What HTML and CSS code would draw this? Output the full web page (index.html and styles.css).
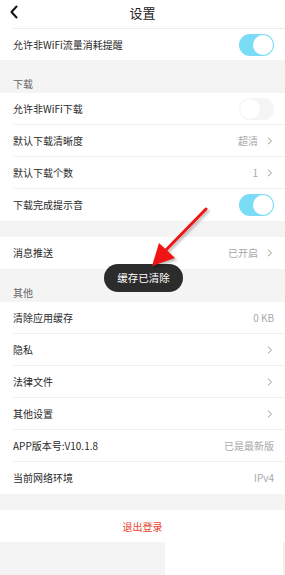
FILE: index.html
```html
<!DOCTYPE html>
<html lang="zh-CN">
<head>
<meta charset="utf-8">
<title>设置</title>
<link rel="stylesheet" href="styles.css">
</head>
<body>
<div class="page">
  <header class="header">
    <svg class="back" width="10" height="14" viewBox="0 0 10 14"><polyline points="7.5,1.5 2.5,7 7.5,12.5" fill="none" stroke="#111" stroke-width="2" stroke-linecap="round" stroke-linejoin="round"/></svg>
    <div class="title">设置</div>
  </header>

  <div class="group">
    <div class="row first"><div class="in"><span class="label">允许非WiFi流量消耗提醒</span><span class="toggle on"><i></i></span></div></div>
  </div>

  <div class="section">下载</div>
  <div class="group">
    <div class="row"><div class="in"><span class="label">允许非WiFi下载</span><span class="toggle"><i></i></span></div></div>
    <div class="row"><div class="in"><span class="label">默认下载清晰度</span><span class="val">超清<svg class="chev" width="6" height="8" viewBox="0 0 6 8"><polyline points="1,0.8 4.6,4 1,7.2" fill="none" stroke="#9a9a9a" stroke-width="1"/></svg></span></div></div>
    <div class="row"><div class="in"><span class="label">默认下载个数</span><span class="val">1<svg class="chev" width="6" height="8" viewBox="0 0 6 8"><polyline points="1,0.8 4.6,4 1,7.2" fill="none" stroke="#9a9a9a" stroke-width="1"/></svg></span></div></div>
    <div class="row last"><div class="in"><span class="label">下载完成提示音</span><span class="toggle on"><i></i></span></div></div>
  </div>

  <div class="gap"></div>
  <div class="group">
    <div class="row last"><div class="in"><span class="label">消息推送</span><span class="val">已开启<svg class="chev" width="6" height="8" viewBox="0 0 6 8"><polyline points="1,0.8 4.6,4 1,7.2" fill="none" stroke="#9a9a9a" stroke-width="1"/></svg></span></div></div>
  </div>

  <div class="section">其他</div>
  <div class="group">
    <div class="row"><div class="in"><span class="label">清除应用缓存</span><span class="val">0 KB</span></div></div>
    <div class="row"><div class="in"><span class="label">隐私</span><span class="val"><svg class="chev" width="6" height="8" viewBox="0 0 6 8"><polyline points="1,0.8 4.6,4 1,7.2" fill="none" stroke="#9a9a9a" stroke-width="1"/></svg></span></div></div>
    <div class="row"><div class="in"><span class="label">法律文件</span><span class="val"><svg class="chev" width="6" height="8" viewBox="0 0 6 8"><polyline points="1,0.8 4.6,4 1,7.2" fill="none" stroke="#9a9a9a" stroke-width="1"/></svg></span></div></div>
    <div class="row"><div class="in"><span class="label">其他设置</span><span class="val"><svg class="chev" width="6" height="8" viewBox="0 0 6 8"><polyline points="1,0.8 4.6,4 1,7.2" fill="none" stroke="#9a9a9a" stroke-width="1"/></svg></span></div></div>
    <div class="row"><div class="in"><span class="label">APP版本号:V10.1.8</span><span class="val">已是最新版</span></div></div>
    <div class="row last"><div class="in"><span class="label">当前网络环境</span><span class="val">IPv4</span></div></div>
  </div>

  <div class="gap"></div>
  <div class="logout">退出登录</div>
  <div class="bottom"><div class="b-left"></div><div class="b-right"></div><div class="b-edge"></div></div>

  <div class="toast">缓存已清除</div>
  <svg class="arrow" width="285" height="575" viewBox="0 0 285 575">
    <line x1="206" y1="209" x2="165" y2="251" stroke="#f01414" stroke-width="3" stroke-linecap="round"/>
    <polygon points="152,266 159,243 175,258" fill="#f01414"/>
  </svg>
</div>
</body>
</html>
```

FILE: styles.css
```css
* { box-sizing: border-box; margin: 0; padding: 0; }
html, body { background: #fff; }
body {
  font-family: "Noto Sans CJK SC", "Noto Sans", "Liberation Sans", sans-serif;
  width: 285px;
  height: 575px;
  overflow: hidden;
}
.page { position: relative; width: 285px; height: 575px; background: #fff; }

.header {
  position: relative;
  height: 29px;
  display: flex;
  align-items: center;
  justify-content: center;
}
.header::after {
  content: "";
  position: absolute;
  left: 13px; right: 0; bottom: 0;
  height: 1px;
  background: #ececec;
}
.back { position: absolute; left: 9px; top: 5px; }
.title { font-size: 13px; color: #222; line-height: 1; margin-top: -5px; }

.group { background: #fff; }
.row { padding-left: 13px; height: 32px; }
.row.first { height: 31px; }
.row .in {
  height: 100%;
  display: flex;
  align-items: center;
  justify-content: space-between;
  padding-right: 11px;
  border-bottom: 1px solid #efefef;
}
.row.last .in, .row.first .in { border-bottom: none; }
.label { font-size: 10px; color: #2a2a2a; line-height: 1; }
.val { font-size: 10px; color: #a8a8a8; line-height: 1; display: flex; align-items: center; gap: 9px; }
.chev { display: block; margin-right: 1px; }

.toggle {
  width: 35px; height: 22px; border-radius: 11px;
  background: #f5f5f5;
  position: relative;
  display: block;
}
.toggle i {
  position: absolute; top: 1px; left: 1px;
  width: 20px; height: 20px; border-radius: 50%;
  background: #fff;
  box-shadow: 0 0 1px rgba(0,0,0,0.06);
}
.toggle.on { background: #7adcf5; }
.toggle.on i { left: 14px; box-shadow: none; }

.section {
  height: 33px;
  background: #f4f4f4;
  padding-left: 13px;
  font-size: 10px;
  color: #666;
  display: flex;
  align-items: flex-end;
  padding-bottom: 4px;
  line-height: 1;
}
.gap { height: 16px; background: #f4f4f4; }

.logout {
  height: 32px;
  display: flex; align-items: center; justify-content: center;
  font-size: 10px; color: #e8412f; background: #fff;
}
.bottom { position: relative; display: flex; height: 35px; }
.b-left { width: 165px; background: #f4f4f4; }
.b-right { flex: 1; background: #fff; }
.b-edge { width: 2px; background: #f0f0f0; }

.toast {
  position: absolute;
  left: 104px; top: 264px;
  width: 79px; height: 28px;
  border-radius: 14px;
  background: #2c2c2c;
  color: #fff;
  font-size: 10.5px;
  display: flex; align-items: center; justify-content: center;
  line-height: 1;
}
.arrow {
  position: absolute; left: 0; top: 0;
  filter: drop-shadow(2px 2px 1px rgba(0,0,0,0.25));
  pointer-events: none;
}
```
